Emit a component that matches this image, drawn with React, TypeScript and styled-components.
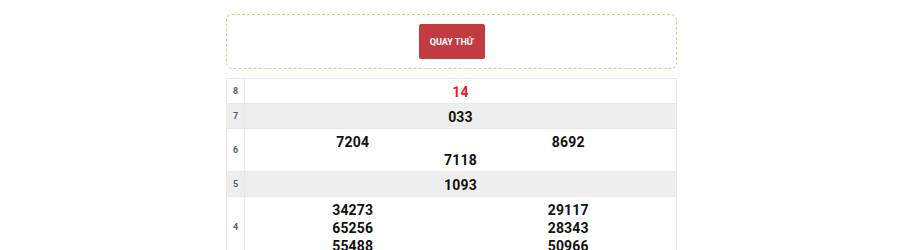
import React from "react";
import styled, { createGlobalStyle } from "styled-components";

const Global = createGlobalStyle`
  html, body { margin: 0; padding: 0; background: #fff; }
  body { font-family: Roboto, "Liberation Sans", Arial, sans-serif; }
`;

const Page = styled.div`
  padding: 14px 0 0 226px;
`;

const Container = styled.div`
  width: 451px;
`;

const SpinBox = styled.div`
  box-sizing: border-box;
  border: 1px dashed #f6c273;
  border-radius: 6px;
  padding: 9px 0;
  display: flex;
  justify-content: center;
`;

const SpinButton = styled.button`
  height: 35px;
  width: 66px;
  padding: 0;
  border: none;
  border-radius: 2px;
  background: #c13b40;
  color: #fff;
  font-family: Roboto, "Liberation Sans", sans-serif;
  font-weight: 700;
  font-size: 9px;
  cursor: pointer;
`;

const Table = styled.div`
  margin-top: 9px;
  border: 1px solid #e8e8e8;
  border-bottom: none;
`;

const Row = styled.div<{ $alt?: boolean }>`
  display: flex;
  background: ${(p) => (p.$alt ? "#eeeeee" : "#ffffff")};
  border-bottom: 1px solid #e8e8e8;
`;

const Label = styled.div`
  width: 17px;
  flex: none;
  border-right: 1px solid #e8e8e8;
  display: flex;
  align-items: center;
  justify-content: center;
  font-size: 9px;
  font-weight: 700;
  color: #56616e;
`;

const Numbers = styled.div`
  flex: 1;
  display: flex;
  flex-wrap: wrap;
  padding: 4px 0 2px;
`;

const Num = styled.div<{ $full?: boolean; $red?: boolean }>`
  width: ${(p) => (p.$full ? "100%" : "50%")};
  text-align: center;
  line-height: 18px;
  font-family: Roboto, "Liberation Sans", sans-serif;
  font-size: 14px;
  font-weight: 700;
  letter-spacing: 0.2px;
  color: ${(p) => (p.$red ? "#ee1c25" : "#111111")};
`;

const Column = styled.div`
  width: 50%;
  display: flex;
  flex-direction: column;
`;

const ColNum = styled(Num)`
  width: 100%;
`;

export default function App() {
  return (
    <>
      <Global />
      <Page>
        <Container>
          <SpinBox>
            <SpinButton>QUAY THỬ</SpinButton>
          </SpinBox>
          <Table>
            <Row>
              <Label>8</Label>
              <Numbers>
                <Num $full $red>14</Num>
              </Numbers>
            </Row>
            <Row $alt>
              <Label>7</Label>
              <Numbers>
                <Num $full>033</Num>
              </Numbers>
            </Row>
            <Row>
              <Label>6</Label>
              <Numbers>
                <Num>7204</Num>
                <Num>8692</Num>
                <Num $full>7118</Num>
              </Numbers>
            </Row>
            <Row $alt>
              <Label>5</Label>
              <Numbers>
                <Num $full>1093</Num>
              </Numbers>
            </Row>
            <Row>
              <Label>4</Label>
              <Numbers>
                <Column>
                  <ColNum>34273</ColNum>
                  <ColNum>65256</ColNum>
                  <ColNum>55488</ColNum>
                </Column>
                <Column>
                  <ColNum>29117</ColNum>
                  <ColNum>28343</ColNum>
                  <ColNum>50966</ColNum>
                </Column>
              </Numbers>
            </Row>
          </Table>
        </Container>
      </Page>
    </>
  );
}
